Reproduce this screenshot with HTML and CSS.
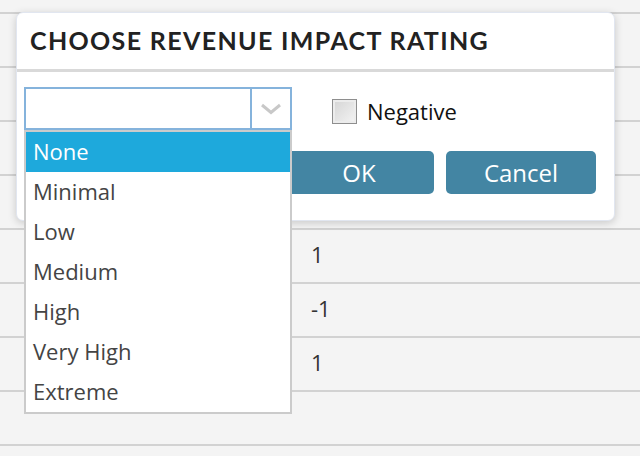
FILE: index.html
```html
<!DOCTYPE html>
<html>
<head>
<meta charset="utf-8">
<link rel="stylesheet" href="styles.css">
</head>
<body>
<div class="page">
  <div class="grid">
    <div class="row"></div>
    <div class="row"></div>
    <div class="row"></div>
    <div class="row"></div>
    <div class="row"><span class="cell">1</span></div>
    <div class="row"><span class="cell">-1</span></div>
    <div class="row"><span class="cell">1</span></div>
    <div class="row"></div>
    <div class="row"></div>
  </div>

  <div class="dialog">
    <div class="dialog-header">CHOOSE REVENUE IMPACT RATING</div>
    <div class="dialog-body">
      <div class="controls">
        <div class="select">
          <div class="select-value"></div>
          <div class="select-arrow">
            <svg width="22" height="12" viewBox="0 0 22 12"><path d="M2 2 L11 9.5 L20 2" fill="none" stroke="#c8c8c8" stroke-width="3"/></svg>
          </div>
        </div>
        <label class="check">
          <span class="box"></span>
          <span class="check-label">Negative</span>
        </label>
      </div>
      <div class="actions">
        <button class="btn">OK</button>
        <button class="btn">Cancel</button>
      </div>
    </div>
  </div>

  <ul class="options">
    <li class="option selected">None</li>
    <li class="option">Minimal</li>
    <li class="option">Low</li>
    <li class="option">Medium</li>
    <li class="option">High</li>
    <li class="option">Very High</li>
    <li class="option">Extreme</li>
  </ul>
</div>
</body>
</html>
```

FILE: styles.css
```css
* { box-sizing: border-box; }
html, body {
  margin: 0;
  padding: 0;
  width: 640px;
  height: 456px;
  overflow: hidden;
  background: #f4f4f4;
  font-family: "Open Sans", "Noto Sans", sans-serif;
}
.page {
  position: relative;
  width: 640px;
  height: 456px;
  overflow: hidden;
}
.grid {
  padding-top: 12px;
  height: 456px;
  overflow: hidden;
}
.row {
  height: 54px;
  border-top: 2px solid #d2d2d2;
  display: flex;
  align-items: center;
  padding-left: 311px;
  font-size: 22px;
  color: #333;
}
.cell {
  display: block;
  margin-top: -4px;
}
.dialog {
  position: absolute;
  left: 16px;
  top: 12px;
  width: 599px;
  height: 209px;
  background: #fff;
  border: 1px solid #e1e6f0;
  border-radius: 7px;
  box-shadow: 0 2px 8px rgba(0, 0, 0, 0.18);
}
.dialog-header {
  height: 59px;
  border-bottom: 3px solid #d9d9d9;
  padding-left: 13px;
  display: flex;
  align-items: center;
  padding-bottom: 3px;
  font-family: "Lato", sans-serif;
  font-weight: 700;
  font-size: 25px;
  color: #222;
  letter-spacing: 1.35px;
}
.dialog-body {
  padding: 15px 18px 0 7px;
}
.controls {
  display: flex;
  align-items: center;
}
.select {
  width: 268px;
  height: 43px;
  border: 2px solid #85b3dc;
  display: flex;
  background: #fff;
}
.select-value {
  flex: 1;
  border-right: 2px solid #85b3dc;
}
.select-arrow {
  width: 38px;
  display: flex;
  align-items: center;
  justify-content: center;
}
.check {
  display: flex;
  align-items: center;
  margin-left: 40px;
  margin-top: 5px;
}
.box {
  width: 25px;
  height: 25px;
  border: 1px solid #8e8e8e;
  background: linear-gradient(135deg, #d4d4d4, #f4f4f4);
  box-shadow: inset 0 0 0 2px #ececec;
}
.check-label {
  margin-left: 10px;
  font-size: 22px;
  color: #111;
}
.actions {
  display: flex;
  justify-content: flex-end;
  gap: 12px;
  margin-top: 21px;
}
.btn {
  width: 150px;
  height: 43px;
  border: none;
  border-radius: 5px;
  background: #4385a3;
  color: #fff;
  font-family: "Open Sans", "Noto Sans", sans-serif;
  font-size: 24px;
  padding: 0;
}
.options {
  position: absolute;
  left: 24px;
  top: 130px;
  width: 268px;
  margin: 0;
  padding: 0;
  list-style: none;
  background: #fff;
  border: 2px solid #cbcbcb;
}
.option {
  height: 40px;
  display: flex;
  align-items: center;
  padding-left: 7px;
  padding-bottom: 2px;
  font-size: 22px;
  color: #444;
}
.option.selected {
  background: #1ea9dc;
  color: #fff;
}
```
